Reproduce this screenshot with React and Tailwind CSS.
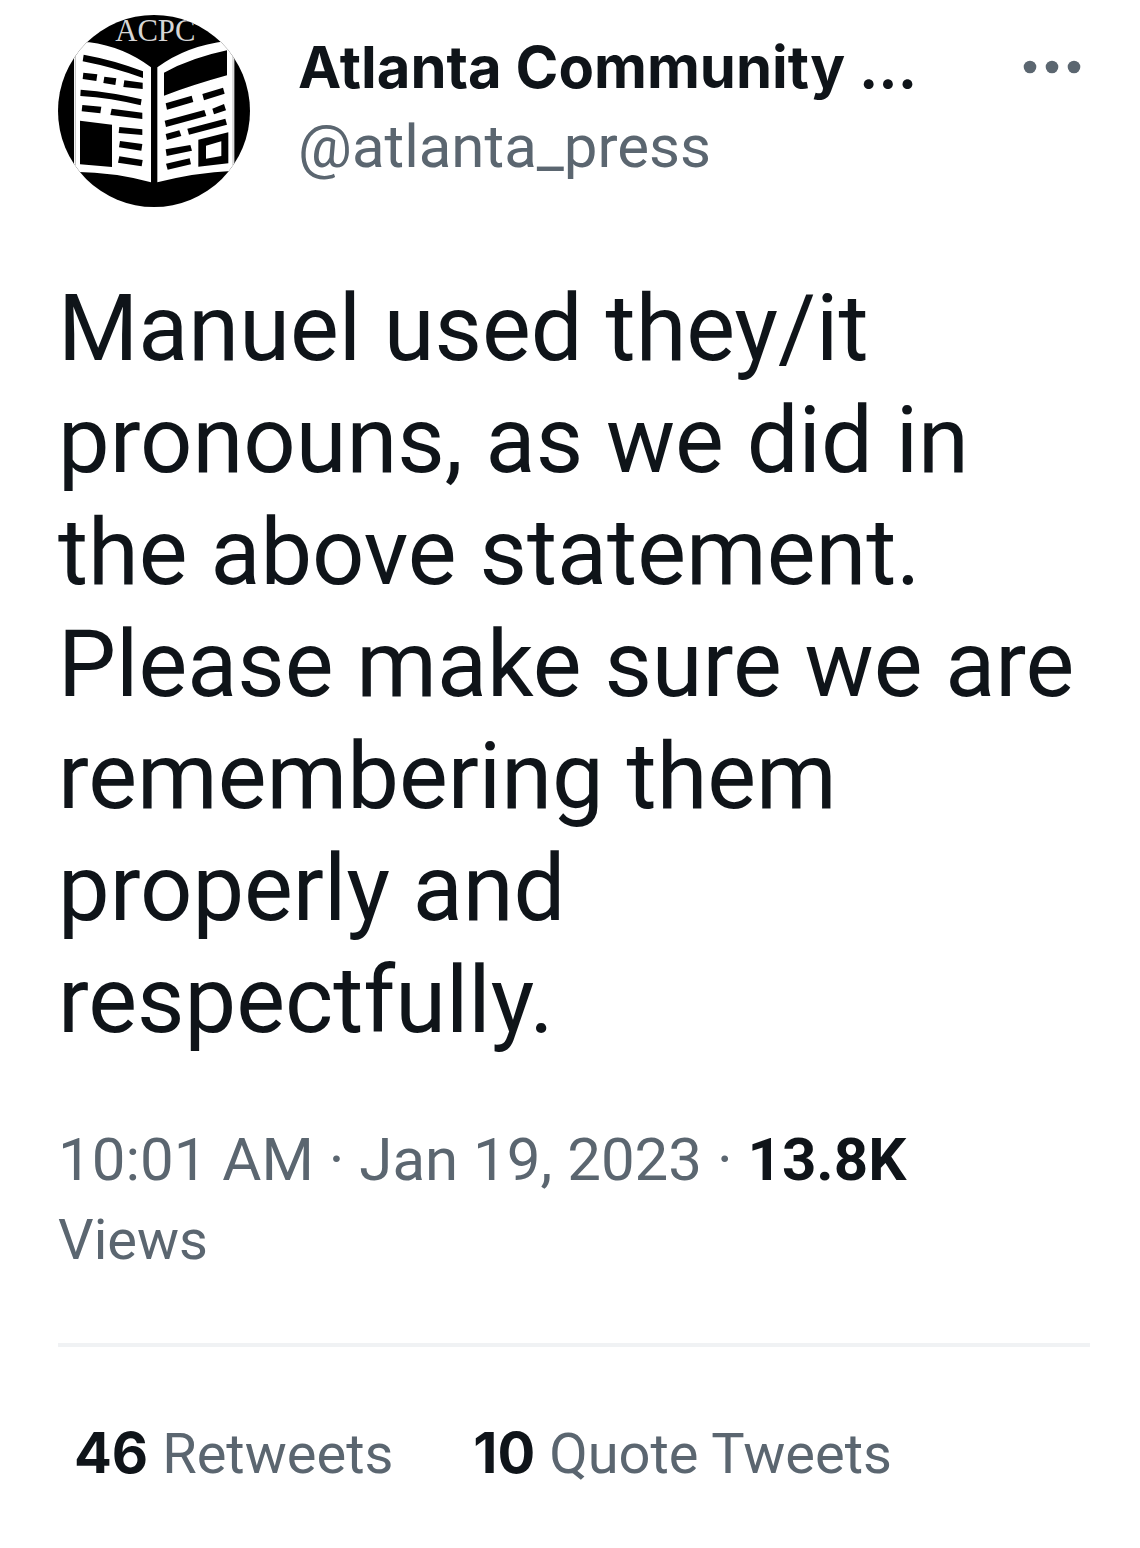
import React from 'react';

const tweet = {
  name: 'Atlanta Community ...',
  handle: '@atlanta_press',
  text: 'Manuel used they/it pronouns, as we did in the above statement. Please make sure we are remembering them properly and respectfully.',
  time: '10:01 AM',
  date: 'Jan 19, 2023',
  views: '13.8K',
};

const stats = [
  { count: '46', label: 'Retweets' },
  { count: '10', label: 'Quote Tweets' },
];

const Avatar = () => (
  <svg viewBox="24 30 576 576" className="size-48 rounded-full" role="img" aria-label="ACPC">
    <rect x="24" y="30" width="576" height="576" fill="#000" />
    <text x="316" y="109" textAnchor="middle" fontSize="92" fill="#d6d6d6" className="font-['Liberation_Serif',serif]">ACPC</text>
    {/* pages */}
    <path d="M72 112 H118 Q220 125 303 187 V532 Q200 502 72 500 Z" fill="#fff" />
    <path d="M322 187 Q410 122 530 108 H553 V497 Q430 503 322 532 Z" fill="#fff" />
    <path d="M76 150 V480 M549 150 V480" stroke="#999" strokeWidth="2" />
    {/* left column */}
    <g fill="#000">
      <path d="M101 149 Q195 166 279 199 V219 Q190 187 98 169 Z" />
      <path d="M100 203 L142 208 L139 228 L98 222 Z" />
      <path d="M163 215 L199 220 L196 240 L160 234 Z" />
      <path d="M223 226 L278 233 V252 L220 246 Z" />
      <path d="M92 254 Q190 262 275 283 L272 301 Q185 279 91 273 Z" />
      <path d="M97 300 L154 305 L151 325 L95 319 Z" />
      <path d="M185 311 L277 323 V342 L181 330 Z" />
      <path d="M90 347 L186 359 V486 L90 478 Z" />
      <path d="M208 366 L277 373 V390 L206 384 Z" />
      <path d="M210 408 L277 417 L274 437 L207 427 Z" />
      <path d="M208 454 L278 465 L275 484 L204 473 Z" />
    </g>
    {/* right column */}
    <g fill="#000">
      <path d="M342 203 Q425 158 531 136 V211 Q430 239 342 272 Z" />
      <path d="M347 295 L425 272 L430 291 L351 314 Z" />
      <path d="M457 267 L519 248 L524 266 L462 286 Z" />
      <path d="M344 347 L463 315 L469 333 L348 366 Z" />
      <path d="M487 311 L522 297 L528 316 L492 328 Z" />
      <path d="M347 387 L388 376 L394 393 L351 405 Z" />
      <path d="M412 371 L526 341 L531 359 L417 389 Z" />
      <path d="M347 433 L421 420 L426 437 L350 453 Z" />
      <path d="M348 476 L419 460 L423 478 L353 494 Z" />
      <path d="M445 404 L535 382 V475 L445 485 Z" />
    </g>
    <path d="M468 422 L514 409 V453 L468 461 Z" fill="#fff" />
  </svg>
);

const App = () => {
  return (
    <article className="bg-white pt-[15px] pr-[50px] pb-14 pl-[58px] font-['Roboto',sans-serif] text-[#5b6670]">
      <header className="flex items-start gap-12">
        <a href="#profile" className="shrink-0">
          <Avatar />
        </a>
        <div className="min-w-0 flex-1 pt-3 leading-20">
          <h1 className="truncate font-['Inter',sans-serif] text-[58px] font-bold text-[#0f1419]">{tweet.name}</h1>
          <p className="text-[60px]">{tweet.handle}</p>
        </div>
        <button type="button" aria-label="More" className="mt-9 mr-2">
          <svg viewBox="0 0 60 32" className="h-8 w-15" fill="currentColor">
            <circle cx="8" cy="16" r="6.3" />
            <circle cx="30" cy="16" r="6.3" />
            <circle cx="52" cy="16" r="6.3" />
          </svg>
        </button>
      </header>

      <p className="mt-[66px] pr-3 text-[92px] leading-28 text-[#0f1419]">{tweet.text}</p>

      <div className="mt-[63px] text-[60px] leading-20">
        <p>
          <time>{tweet.time} · {tweet.date}</time> · <strong className="font-bold text-[#0f1419]">{tweet.views}</strong>
        </p>
        <p className="text-[56px]">Views</p>
      </div>

      <hr className="mt-[63px] border-t-4 border-[#f0f2f4]" />

      <div className="mt-[66px] flex gap-20 px-4 text-[56px] leading-20">
        {stats.map((stat) => (
          <a key={stat.label} href="#stats">
            <strong className="font-['Inter',sans-serif] font-bold text-[#0f1419]">{stat.count}</strong> {stat.label}
          </a>
        ))}
      </div>
    </article>
  );
};

export default App;
